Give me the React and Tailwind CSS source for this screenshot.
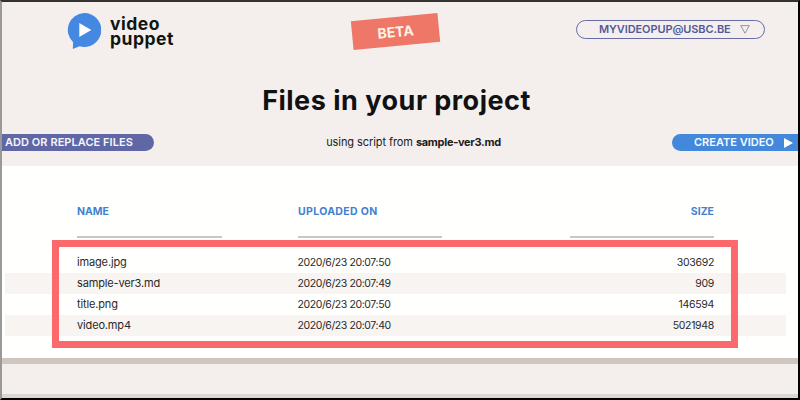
const files = [
  { name: "image.jpg", uploaded: "2020/6/23 20:07:50", size: 303692 },
  { name: "sample-ver3.md", uploaded: "2020/6/23 20:07:49", size: 909 },
  { name: "title.png", uploaded: "2020/6/23 20:07:50", size: 146594 },
  { name: "video.mp4", uploaded: "2020/6/23 20:07:40", size: 5021948 },
];

function Logo() {
  return (
    <div className="flex w-[285px] items-start gap-[9px]">
      <svg width="34" height="37" viewBox="0 0 34 37" className="mt-[10px]">
        <path d="M17 1a17 17 0 1 1-4.5 33.3L5.8 37l.3-6.7A17 17 0 0 1 17 1z" fill="#4488e2" />
        <path d="M12.3 11v14l12-7z" fill="#fff" />
      </svg>
      <div className="mt-[14px] text-[17.5px] leading-[15px] font-bold tracking-[0.5px] text-[#101510]">
        video
        <br />
        puppet
      </div>
    </div>
  );
}

function Header() {
  return (
    <header className="flex h-[64px] items-start pl-[65px]">
      <Logo />
      <div className="mt-[15px] flex h-[29px] w-[87px] -rotate-[5.5deg] items-center justify-center bg-[#ee7768] text-[14px] font-bold text-[#fff3e6]">
        BETA
      </div>
      <button className="mt-[18px] ml-[137px] flex h-[19px] w-[189px] items-center justify-between rounded-full border border-[#656ca6] pr-[14px] pl-[22px] text-[11px] font-semibold text-[#515a9b]">
        <span className="tracking-[-0.1px]">MYVIDEOPUP@USBC.BE</span>
        <svg width="10" height="9" viewBox="0 0 10 9" fill="none" stroke="#777b98" strokeWidth="0.8">
          <path d="M.7.6h8.6L5 8.2z" />
        </svg>
      </button>
    </header>
  );
}

function Toolbar() {
  return (
    <div className="flex h-[17px] items-center justify-between text-[11px]">
      <button className="flex h-[17px] w-[152px] items-center rounded-r-full bg-[#6067a4] pl-[3px] font-semibold tracking-[0.05px] whitespace-nowrap text-[#f4f4ff]">
        ADD OR REPLACE FILES
      </button>
      <p className="pl-[1px] tracking-[-0.08px] text-[#1c1c1c]">
        using script from <b className="font-bold tracking-[-0.3px]">sample-ver3.md</b>
      </p>
      <button className="flex h-[17px] w-[126px] items-center justify-between rounded-l-full bg-[#4488dc] pr-[5px] pl-[22px] font-semibold text-[#f4fbff]">
        CREATE VIDEO
        <svg width="9" height="10" viewBox="0 0 9 10" fill="#fff">
          <path d="M0 0v10l9-5z" />
        </svg>
      </button>
    </div>
  );
}

function FileTable() {
  return (
    <main className="relative h-[192px] bg-[#fffffd]">
      <div className="flex h-[86px] pt-[39px] pr-[84px] pl-[75px] text-[10.5px] leading-[14px] font-bold text-[#4381cf]">
        <div className="mr-[76px] h-[33px] w-[145px] border-b-2 border-[#cbc5c9]">NAME</div>
        <div className="h-[33px] w-[144px] border-b-2 border-[#cbc5c9] tracking-[0.35px]">UPLOADED ON</div>
        <div className="ml-auto h-[33px] w-[144px] border-b-2 border-[#cbc5c9] text-right">SIZE</div>
      </div>
      {files.map((file) => (
        <div
          key={file.name}
          className="mr-[12px] ml-[3px] flex h-[21px] items-center pr-[72px] pl-[72px] text-[11px] text-[#292929] odd:bg-[#f8f4f2]"
        >
          <div className="w-[220.5px] tracking-[-0.15px]">{file.name}</div>
          <div className="text-[10.5px] tracking-[-0.4px]">{file.uploaded}</div>
          <div className="ml-auto text-[10.5px] tracking-[-0.3px]">{file.size}</div>
        </div>
      ))}
      {/* highlight around the listing */}
      <div className="absolute top-[74px] left-[50px] h-[108px] w-[686px] border-[7px] border-[#fc696c]" />
    </main>
  );
}

export default function App() {
  return (
    <div className="flex h-[400px] w-[800px] flex-col border-t-2 border-r-2 border-b-2 border-l-2 border-t-[#33322e] border-r-black border-b-black border-l-[#999] bg-[#f4efed] font-['Inter','Liberation_Sans',sans-serif]">
      <Header />
      <h1 className="h-[68px] pt-[18px] pr-[7px] text-center text-[27px] leading-[34px] font-bold tracking-[0.5px] text-[#111]">
        Files in your project
      </h1>
      <Toolbar />
      <div className="h-[15px]" />
      <FileTable />
      <div className="h-[6px] bg-[#cfc6c0]" />
      <div className="flex-1" />
      <div className="h-[4px] bg-[#dcd7d5]" />
    </div>
  );
}
